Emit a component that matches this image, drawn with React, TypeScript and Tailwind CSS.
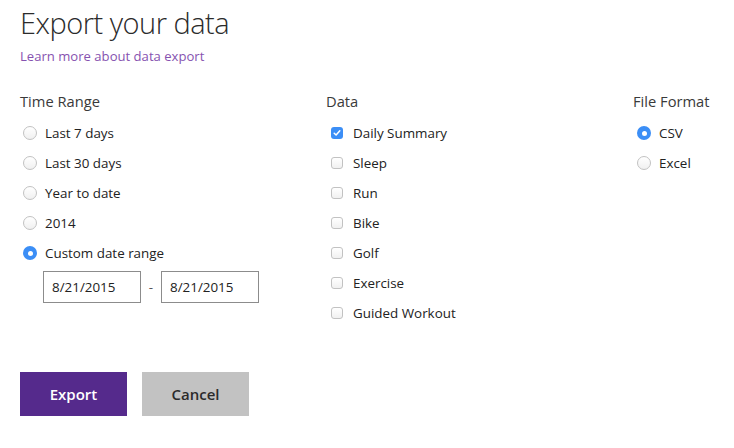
import { useState } from "react";

const font = { fontFamily: '"Open Sans", "Noto Sans", sans-serif' };

const Radio = ({ checked }: { checked: boolean }) =>
  checked ? (
    <span className="flex h-[14px] w-[14px] shrink-0 items-center justify-center rounded-full bg-[#3b8ef6]">
      <span className="h-[5px] w-[5px] rounded-full bg-white" />
    </span>
  ) : (
    <span className="h-[14px] w-[14px] shrink-0 rounded-full border border-[#c2c2c2] bg-gradient-to-b from-white to-[#f0f0f0]" />
  );

const Checkbox = ({ checked }: { checked: boolean }) =>
  checked ? (
    <span className="flex h-[12px] w-[12px] shrink-0 items-center justify-center rounded-[3px] bg-[#3b8ef6]">
      <svg width="8" height="8" viewBox="0 0 8 8" fill="none">
        <path d="M1.2 4.2 L3.1 6 L6.8 1.8" stroke="white" strokeWidth="1.5" strokeLinecap="round" strokeLinejoin="round" />
      </svg>
    </span>
  ) : (
    <span className="h-[12px] w-[12px] shrink-0 rounded-[3px] border border-[#c2c2c2] bg-gradient-to-b from-white to-[#f0f0f0]" />
  );

export default function App() {
  const [range, setRange] = useState("Custom date range");
  const [format, setFormat] = useState("CSV");
  const [data, setData] = useState<string[]>(["Daily Summary"]);

  const ranges = ["Last 7 days", "Last 30 days", "Year to date", "2014", "Custom date range"];
  const kinds = ["Daily Summary", "Sleep", "Run", "Bike", "Golf", "Exercise", "Guided Workout"];

  const toggle = (k: string) =>
    setData((d) => (d.includes(k) ? d.filter((x) => x !== k) : [...d, k]));

  return (
    <div className="min-h-[448px] w-[734px] bg-white px-[20px] pt-[5px] text-[#222]" style={font}>
      <h1 className="text-[29px] font-light leading-[36px] tracking-[-0.5px] text-[#2b2b2b]">Export your data</h1>
      <a className="mt-[5px] block text-[13.1px] leading-[20px] text-[#8652b0]">Learn more about data export</a>

      <div className="mt-[25px] grid grid-cols-[306px_307px_1fr]">
        <div>
          <p className="text-[14.7px] leading-[20px] text-[#3a3a3a]">Time Range</p>
          <div className="mt-[7px]">
            {ranges.map((r) => (
              <div
                key={r}
                onClick={() => setRange(r)}
                className="flex h-[30px] cursor-pointer items-center gap-[8px] pl-[3px] text-[13.4px]"
              >
                <Radio checked={range === r} />
                <span>{r}</span>
              </div>
            ))}
          </div>
          <div className="mt-[3px] flex items-center pl-[23px] text-[13.4px]">
            <div className="flex h-[32px] w-[98px] items-center border border-[#8c8c8c] pl-[8px]">8/21/2015</div>
            <span className="w-[20px] text-center text-[#555]">-</span>
            <div className="flex h-[32px] w-[98px] items-center border border-[#8c8c8c] pl-[8px]">8/21/2015</div>
          </div>
        </div>

        <div>
          <p className="text-[14.7px] leading-[20px] text-[#3a3a3a]">Data</p>
          <div className="mt-[7px]">
            {kinds.map((k) => (
              <div
                key={k}
                onClick={() => toggle(k)}
                className="flex h-[30px] cursor-pointer items-center gap-[10px] pl-[5px] text-[13.4px]"
              >
                <Checkbox checked={data.includes(k)} />
                <span>{k}</span>
              </div>
            ))}
          </div>
        </div>

        <div>
          <p className="text-[14.7px] leading-[20px] text-[#3a3a3a]">File Format</p>
          <div className="mt-[7px]">
            {["CSV", "Excel"].map((f) => (
              <div
                key={f}
                onClick={() => setFormat(f)}
                className="flex h-[30px] cursor-pointer items-center gap-[8px] pl-[4px] text-[13.4px]"
              >
                <Radio checked={format === f} />
                <span>{f}</span>
              </div>
            ))}
          </div>
        </div>
      </div>

      <div className="mt-[44px] flex gap-[15px]">
        <button className="h-[44px] w-[107px] bg-[#552a8c] text-[15px] font-semibold text-white">Export</button>
        <button className="h-[44px] w-[107px] bg-[#c2c2c2] text-[15px] font-semibold text-[#2b2b2b]">Cancel</button>
      </div>
    </div>
  );
}
